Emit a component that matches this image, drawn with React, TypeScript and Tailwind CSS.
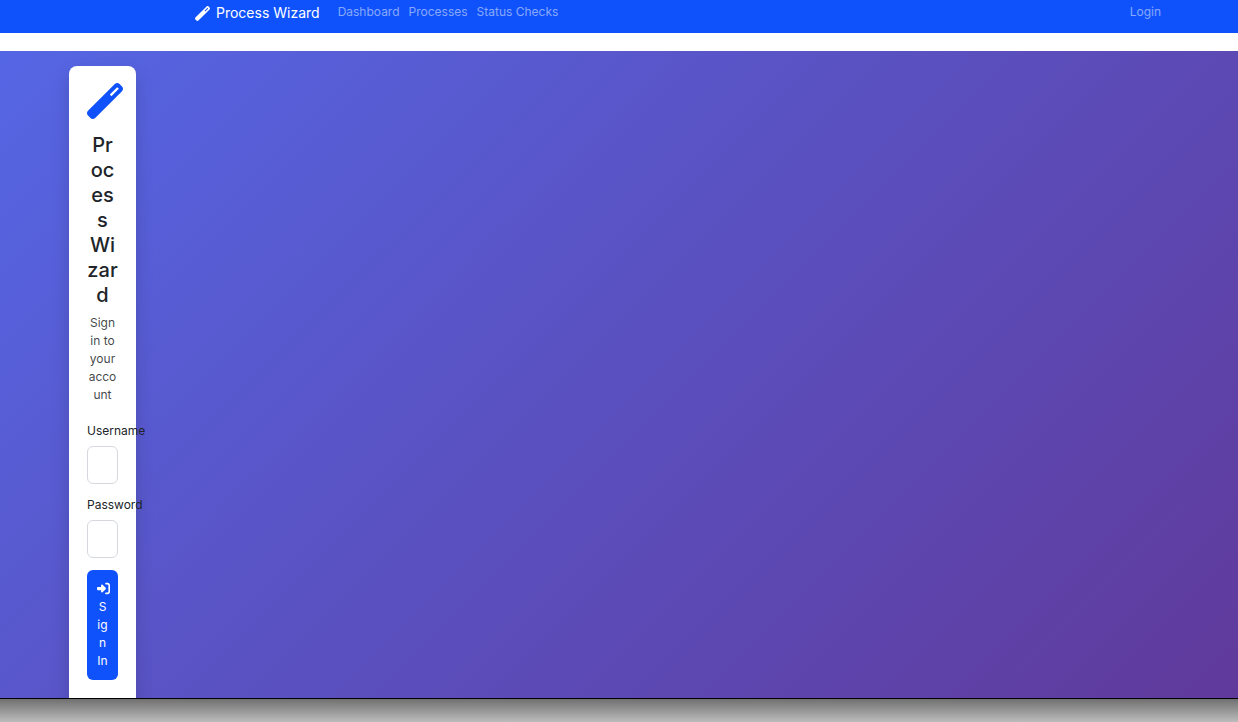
import { FaRightToBracket, FaWandMagic } from "react-icons/fa6";

const navLinks = [
  { label: "Dashboard", href: "#dashboard" },
  { label: "Processes", href: "#processes" },
  { label: "Status Checks", href: "#status-checks" }
];

const fields = [
  { id: "username", label: "Username", type: "text" },
  { id: "password", label: "Password", type: "password" }
];

function Navbar() {
  return (
    <nav className="flex h-[33px] shrink-0 items-start bg-[#0f52fb] pl-[195px] pr-[77px] text-xs leading-6 text-white/50">
      <a href="#home" className="mr-[18px] flex items-center text-sm leading-[26px] text-white">
        <FaWandMagic className="mr-1.5 size-[15px]" />
        Process Wizard
      </a>
      <div className="flex flex-1 gap-[9px]">
        {navLinks.map((link) => (
          <a key={link.href} href={link.href}>
            {link.label}
          </a>
        ))}
      </div>
      <a href="#login">Login</a>
    </nav>
  );
}

function LoginCard() {
  return (
    <div className="ml-[69px] mt-[15px] w-[67px] rounded-lg bg-white px-[18px] pt-[17px] pb-9 shadow-[0_8px_18px_rgba(0,0,0,0.15)]">
      <div className="text-center">
        <FaWandMagic className="mb-3.5 size-9 max-w-none text-[#0f52fb]" />
        <h1 className="mb-1.5 wrap-break-word text-xl leading-[25px] font-medium">Process Wizard</h1>
        <p className="mb-[18px] wrap-break-word text-[#212529]/85">Sign in to your account</p>
      </div>
      <form>
        {fields.map((field) => (
          <div key={field.id} className="mb-3">
            <label htmlFor={field.id} className="mb-1.5 block">
              {field.label}
            </label>
            <input
              id={field.id}
              type={field.type}
              className="block h-[38px] w-full rounded-md border border-[#d5d9de] bg-white px-2"
            />
          </div>
        ))}
        <button
          type="submit"
          className="block w-full rounded-md bg-[#0f52fb] p-2.5 text-center text-white"
        >
          <FaRightToBracket className="mt-0.5 mb-[3px] block size-[13px]" />
          S
          <br />
          ig
          <br />
          n
          <br />
          In
        </button>
      </form>
    </div>
  );
}

export default function App() {
  return (
    <div className="flex h-screen flex-col overflow-hidden bg-white font-['Inter',sans-serif] text-xs leading-[18px] text-[#212529]">
      <Navbar />
      <main className="mt-[18px] flex min-h-0 flex-1 items-start overflow-hidden bg-linear-135/srgb from-[#5566e4] to-[#603a9b]">
        <LoginCard />
      </main>
      <div className="h-6 shrink-0 border-t border-black bg-linear-to-b/srgb from-[#707070] to-[#bcbcbc]" />
    </div>
  );
}
